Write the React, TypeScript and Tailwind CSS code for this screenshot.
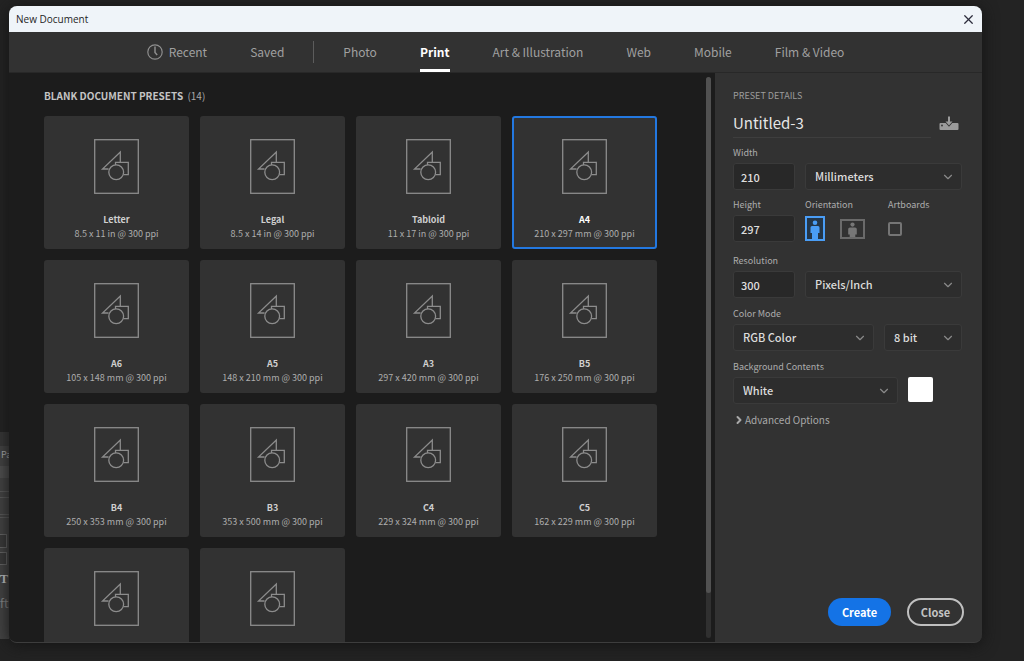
import { useState, type ReactNode } from "react";
import { ChevronDown, ChevronRight, X } from "lucide-react";

const tabs = ["Photo", "Print", "Art & Illustration", "Web", "Mobile", "Film & Video"];

const presets = [
  { name: "Letter", size: "8.5 x 11 in @ 300 ppi" },
  { name: "Legal", size: "8.5 x 14 in @ 300 ppi" },
  { name: "Tabloid", size: "11 x 17 in @ 300 ppi" },
  { name: "A4", size: "210 x 297 mm @ 300 ppi" },
  { name: "A6", size: "105 x 148 mm @ 300 ppi" },
  { name: "A5", size: "148 x 210 mm @ 300 ppi" },
  { name: "A3", size: "297 x 420 mm @ 300 ppi" },
  { name: "B5", size: "176 x 250 mm @ 300 ppi" },
  { name: "B4", size: "250 x 353 mm @ 300 ppi" },
  { name: "B3", size: "353 x 500 mm @ 300 ppi" },
  { name: "C4", size: "229 x 324 mm @ 300 ppi" },
  { name: "C5", size: "162 x 229 mm @ 300 ppi" },
  { name: "C6", size: "114 x 162 mm @ 300 ppi" },
  { name: "DL", size: "110 x 220 mm @ 300 ppi" },
];

const PresetIcon = () => (
  <svg width="45" height="55" viewBox="0 0 45 55" fill="none" stroke="#8c8c8c" strokeWidth="1.3">
    <rect x="0.7" y="0.7" width="43.6" height="53.6" />
    <path d="M14.5 30H8.5L26.3 13V23" />
    <path d="M21.5 26V23.3H34.3V35.7H29.5" />
    <circle cx="22.2" cy="33.3" r="7.4" />
  </svg>
);

const ClockIcon = () => (
  <svg width="16" height="16" viewBox="0 0 16 16" fill="none" stroke="#8e8e8e" strokeWidth="1.2">
    <circle cx="8" cy="8" r="7.2" />
    <path d="M8 2.5V8.5L10.2 11" strokeWidth="1.5" />
  </svg>
);

const SaveIcon = () => (
  <svg width="20" height="15" viewBox="0 0 20 15" fill="#9c9c9c">
    <path d="M1.5 7H18.5Q19.5 7 19.5 8V13Q19.5 14 18.5 14H1.5Q0.5 14 0.5 13V8Q0.5 7 1.5 7Z" />
    <path d="M9 0.5H11V5.5H13.5L10 9.6L6.5 5.5H9Z" stroke="#323232" strokeWidth="1.6" paintOrder="stroke" />
    <circle cx="3" cy="9.5" r="0.9" fill="#323232" />
  </svg>
);

const PortraitIcon = () => (
  <svg width="20" height="25" viewBox="0 0 20 25">
    <rect x="1" y="1" width="18" height="23" fill="#243648" stroke="#4a9df5" strokeWidth="2" />
    <circle cx="10" cy="6.8" r="2.3" fill="#4a9df5" />
    <path d="M7 10H13Q14.5 10 14.5 11.5V17H13V24H7V17H5.5V11.5Q5.5 10 7 10Z" fill="#4a9df5" />
  </svg>
);

const LandscapeIcon = () => (
  <svg width="25" height="20" viewBox="0 0 25 20">
    <rect x="1" y="1" width="23" height="18" fill="none" stroke="#6a6a6a" strokeWidth="2" />
    <circle cx="12.5" cy="5.6" r="2.1" fill="#777777" />
    <path d="M10 8.5H15Q16.8 8.5 16.8 10V15.5H15.3V18H9.7V15.5H8.2V10Q8.2 8.5 10 8.5Z" fill="#777777" />
  </svg>
);

const Field = ({ id, label, children, className = "" }: { id: string; label: string; children: ReactNode; className?: string }) => (
  <div className={className}>
    <label htmlFor={id} className="block text-[9px] leading-4 mb-[2px] text-[#adadad]">{label}</label>
    {children}
  </div>
);

const NumberInput = ({ id, value }: { id: string; value: string }) => (
  <input
    id={id}
    defaultValue={value}
    className="block w-[62px] h-[27px] px-[7px] rounded-[3px] border border-[#3a3a3a] bg-[#282828] text-[11px] font-medium text-[#dedede] outline-none"
  />
);

const Select = ({ id, label, value, className }: { id: string; label?: string; value: string; className: string }) => (
  <div className={`relative ${className}`}>
    <select
      id={id}
      aria-label={label}
      className="block appearance-none w-full h-[27px] pl-[9px] pr-6 pb-px rounded-[3px] border border-[#3a3a3a] bg-[#2d2d2d] text-[11px] font-medium text-[#dcdcdc] outline-none"
    >
      <option>{value}</option>
    </select>
    <ChevronDown size={14} className="absolute right-[7px] top-[7px] text-[#8a8a8a] pointer-events-none" />
  </div>
);

// Slice of the workspace panel that shows behind the dialog
const WorkspaceEdge = () => (
  <div className="w-[9px] shrink-0 overflow-hidden flex flex-col justify-end text-[#b0b0b0]">
    <div className="flex flex-col h-[207px] mb-1 bg-[#444444]">
      <div className="h-[14px] shrink-0 bg-[#373737]" />
      <div className="h-5 shrink-0 pl-px pt-[3px] text-[9px] leading-3">Pa</div>
      <div className="h-3 shrink-0 bg-[#505050]" />
      <div className="h-[13px] mt-[1px] shrink-0 border-b border-[#5a5a5a]" />
      <div className="h-[18px] mt-[5px] shrink-0 border-y border-[#5a5a5a]" />
      <div className="h-[14px] mt-[2px] shrink-0 border-t border-[#5a5a5a]" />
      <div className="w-[7px] h-[14px] mt-[3px] shrink-0 border border-l-0 border-[#666666] bg-[#3a3a3a]" />
      <div className="w-[7px] h-[13px] mt-1 shrink-0 border border-l-0 border-[#666666] bg-[#3a3a3a]" />
      <div className="mt-[6px] font-['Liberation_Serif',serif] font-bold text-xs leading-4 text-[#cccccc]">T</div>
      <div className="mt-2 text-xs leading-4 text-[#888888]">ft</div>
    </div>
  </div>
);

const App = () => {
  const [activeTab, setActiveTab] = useState("Print");
  const [activePreset, setActivePreset] = useState("A4");

  return (
    <div className="flex h-screen pt-[6px] pr-[42px] pb-[18px] bg-[#232323] font-['Noto_Sans_CJK_SC',sans-serif] overflow-hidden">
      <WorkspaceEdge />
      <main className="flex flex-col flex-1 min-w-0 rounded-lg overflow-hidden bg-[#323232] shadow-[0_2px_16px_#141414] border-b border-[#3d3d3d]">
        <header className="flex items-center justify-between h-[26px] shrink-0 pl-[7px] pr-[6px] bg-[#eff4f9]">
          <h1 className="font-['Open_Sans',sans-serif] text-[10px] text-[#1f1f1f]">New Document</h1>
          <button aria-label="Close window" className="text-[#2c2c3c]">
            <X size={15} strokeWidth={2} />
          </button>
        </header>

        <nav className="flex justify-center items-stretch h-[41px] shrink-0 border-b border-[#282828] text-xs text-[#a0a0a0]">
          <button className="flex items-center gap-[6px] mr-[43px]">
            <ClockIcon />
            Recent
          </button>
          <button>Saved</button>
          <div className="w-px h-[22px] mx-[29px] self-center bg-[#5c5c5c]" />
          <div className="flex gap-[43px]">
            {tabs.map((tab) => (
              <button
                key={tab}
                onClick={() => setActiveTab(tab)}
                className={
                  tab === activeTab
                    ? "border-y-3 border-t-transparent border-b-white font-bold text-white"
                    : "border-y-3 border-transparent"
                }
              >
                {tab}
              </button>
            ))}
          </div>
        </nav>

        <div className="flex flex-1 min-h-0">
          <section className="flex flex-1 min-w-0 bg-[#1c1c1c]">
            <div className="flex-1 min-w-0 overflow-y-auto [scrollbar-width:none] pl-[35px] pt-[15px]">
              <h2 className="text-[10px] leading-4 mb-3 font-bold text-[#c4c4c4]">
                BLANK DOCUMENT PRESETS <span className="ml-[2px] font-normal text-[#a8a8a8]">(14)</span>
              </h2>
              <div className="grid grid-cols-[repeat(auto-fill,145px)] gap-[11px]">
                {presets.map((preset) => (
                  <button
                    key={preset.name}
                    onClick={() => setActivePreset(preset.name)}
                    className={`flex flex-col items-center h-[133px] pt-[21px] rounded-[3px] border-2 bg-[#323232] ${
                      preset.name === activePreset ? "border-[#2378e0] text-white" : "border-[#323232] text-[#cfcfcf]"
                    }`}
                  >
                    <PresetIcon />
                    <span className="mt-[19px] text-[9px] leading-[14px] font-bold">{preset.name}</span>
                    <span className="text-[9px] leading-[14px] text-[#adadad]">{preset.size}</span>
                  </button>
                ))}
              </div>
            </div>
            <div className="w-[5px] mt-1 mb-1 mr-1 rounded-full bg-[#303030]">
              <div className="h-[92%] rounded-full bg-[#515151]" />
            </div>
          </section>

          <aside className="flex flex-col w-[267px] shrink-0 pl-[18px] pt-[15px]">
            <h2 className="text-[9px] leading-4 text-[#9c9c9c]">PRESET DETAILS</h2>
            <div className="flex items-center mt-1 mb-[7px] gap-2">
              <input
                aria-label="Document name"
                defaultValue="Untitled-3"
                className="w-[198px] h-[30px] border-b border-[#3e3e3e] text-[15px] text-[#e6e6e6] outline-none"
              />
              <button aria-label="Save preset">
                <SaveIcon />
              </button>
            </div>

            <div className="flex items-end gap-[10px]">
              <Field id="width" label="Width">
                <NumberInput id="width" value="210" />
              </Field>
              <Select id="unit" label="Unit" value="Millimeters" className="w-[157px]" />
            </div>

            <div className="flex mt-[7px]">
              <Field id="height" label="Height" className="mr-[10px]">
                <NumberInput id="height" value="297" />
              </Field>
              <div className="w-[83px]">
                <div className="text-[9px] leading-4 mb-[2px] text-[#adadad]">Orientation</div>
                <div className="flex items-center gap-[15px] h-[27px]">
                  <button aria-label="Portrait">
                    <PortraitIcon />
                  </button>
                  <button aria-label="Landscape">
                    <LandscapeIcon />
                  </button>
                </div>
              </div>
              <Field id="artboards" label="Artboards">
                <div className="flex items-center h-[27px]">
                  <input id="artboards" type="checkbox" className="appearance-none size-[14px] rounded-[2px] border-2 border-[#757575]" />
                </div>
              </Field>
            </div>

            <div className="flex items-end gap-[10px] mt-[11px]">
              <Field id="resolution" label="Resolution">
                <NumberInput id="resolution" value="300" />
              </Field>
              <Select id="resolution-unit" label="Resolution unit" value="Pixels/Inch" className="w-[157px]" />
            </div>

            <div className="flex items-end gap-[10px] mt-2">
              <Field id="color-mode" label="Color Mode">
                <Select id="color-mode" value="RGB Color" className="w-[141px]" />
              </Field>
              <Select id="bit-depth" label="Bit depth" value="8 bit" className="w-[78px]" />
            </div>

            <div className="flex items-end gap-[10px] mt-2">
              <Field id="background" label="Background Contents">
                <Select id="background" value="White" className="w-[165px]" />
              </Field>
              <button aria-label="Background color" className="size-[25px] mb-[2px] rounded-[2px] bg-white" />
            </div>

            <button className="flex items-center self-start mt-2 text-[10px] leading-4 text-[#a8a8a8]">
              <ChevronRight size={12} strokeWidth={4} />
              Advanced Options
            </button>

            <div className="flex justify-end gap-4 mt-auto pb-4 pr-[18px] text-[11px] font-bold">
              <button className="w-[63px] h-7 rounded-full bg-[#1473e6] text-white">Create</button>
              <button className="w-[57px] h-7 rounded-full border-2 border-[#c0c0c0] text-[#c4c4c4]">Close</button>
            </div>
          </aside>
        </div>
      </main>
    </div>
  );
};

export default App;
